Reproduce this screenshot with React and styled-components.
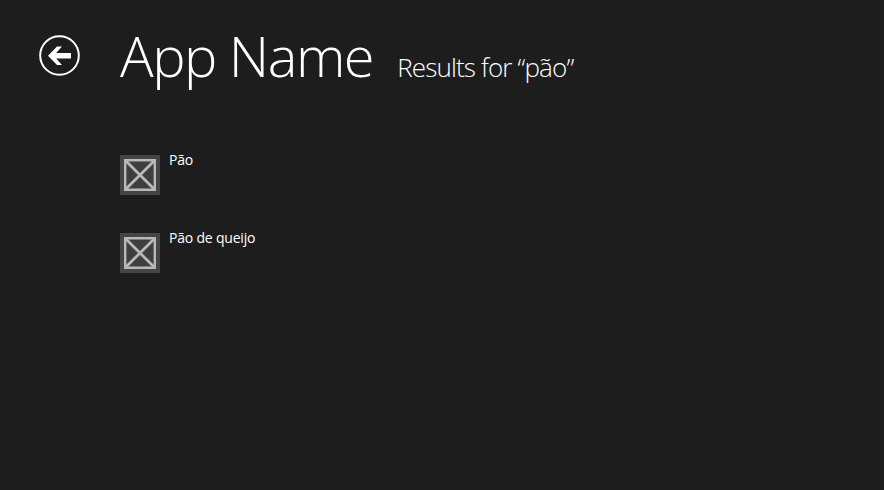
import React from "react";
import styled, { createGlobalStyle } from "styled-components";

const Global = createGlobalStyle`
  html, body { margin: 0; padding: 0; background: #1d1d1d; }
  body { font-family: "Open Sans", "Noto Sans", sans-serif; color: #fff; }
`;

const Page = styled.div`
  width: 884px;
  height: 490px;
  overflow: hidden;
  background: #1d1d1d;
  display: grid;
  grid-template-columns: 120px 1fr;
  grid-template-rows: 140px 1fr;
`;

const BackCell = styled.div`
  padding: 35px 0 0 39px;
`;

const BackButton = styled.svg`
  display: block;
  width: 41px;
  height: 41px;
`;

const Header = styled.header`
  display: flex;
  align-items: baseline;
  height: 70px;
  padding-top: 18px;
`;

const Title = styled.h1`
  margin: 0;
  font-size: 56px;
  line-height: 74px;
  font-weight: 300;
  letter-spacing: -1.5px;
`;

const Subtitle = styled.h2`
  margin: 0 0 0 24px;
  font-size: 26px;
  line-height: 34px;
  font-weight: 300;
  letter-spacing: -0.85px;
`;

const List = styled.ul`
  grid-column: 2;
  list-style: none;
  margin: 0;
  padding: 15px 0 0;
  display: flex;
  flex-direction: column;
  gap: 38px;
`;

const Row = styled.li`
  display: flex;
  gap: 9px;
  height: 40px;
`;

const Thumb = styled.svg`
  display: block;
  width: 40px;
  height: 40px;
  flex: none;
`;

const Label = styled.span`
  margin-top: -5px;
  font-size: 14px;
  line-height: 19px;
  font-weight: 400;
  letter-spacing: -0.2px;
`;

const Placeholder = () => (
  <Thumb viewBox="0 0 40 40">
    <rect width="40" height="40" fill="#454545" />
    <rect x="5" y="5" width="30" height="30" fill="#3e3e3e" />
    <path d="M5.2 5.2h29.6v29.6H5.2z" fill="none" stroke="#b8b8b8" strokeWidth="2.4" />
    <path d="M5.2 5.2l29.6 29.6M34.8 5.2L5.2 34.8" fill="none" stroke="#b8b8b8" strokeWidth="2.8" />
  </Thumb>
);

export default function App() {
  return (
    <Page>
      <Global />
      <BackCell>
        <BackButton viewBox="0 0 41 41">
          <circle cx="20.5" cy="20.5" r="19.3" fill="none" stroke="#fff" strokeWidth="2" />
          <path d="M9 20.7L18 11.5h5L17.2 18H32v5.5H17.2l5.8 6.5h-5z" fill="#fff" />
        </BackButton>
      </BackCell>
      <Header>
        <Title>App Name</Title>
        <Subtitle>Results for “pão”</Subtitle>
      </Header>
      <List>
        <Row><Placeholder /><Label>Pão</Label></Row>
        <Row><Placeholder /><Label>Pão de queijo</Label></Row>
      </List>
    </Page>
  );
}
